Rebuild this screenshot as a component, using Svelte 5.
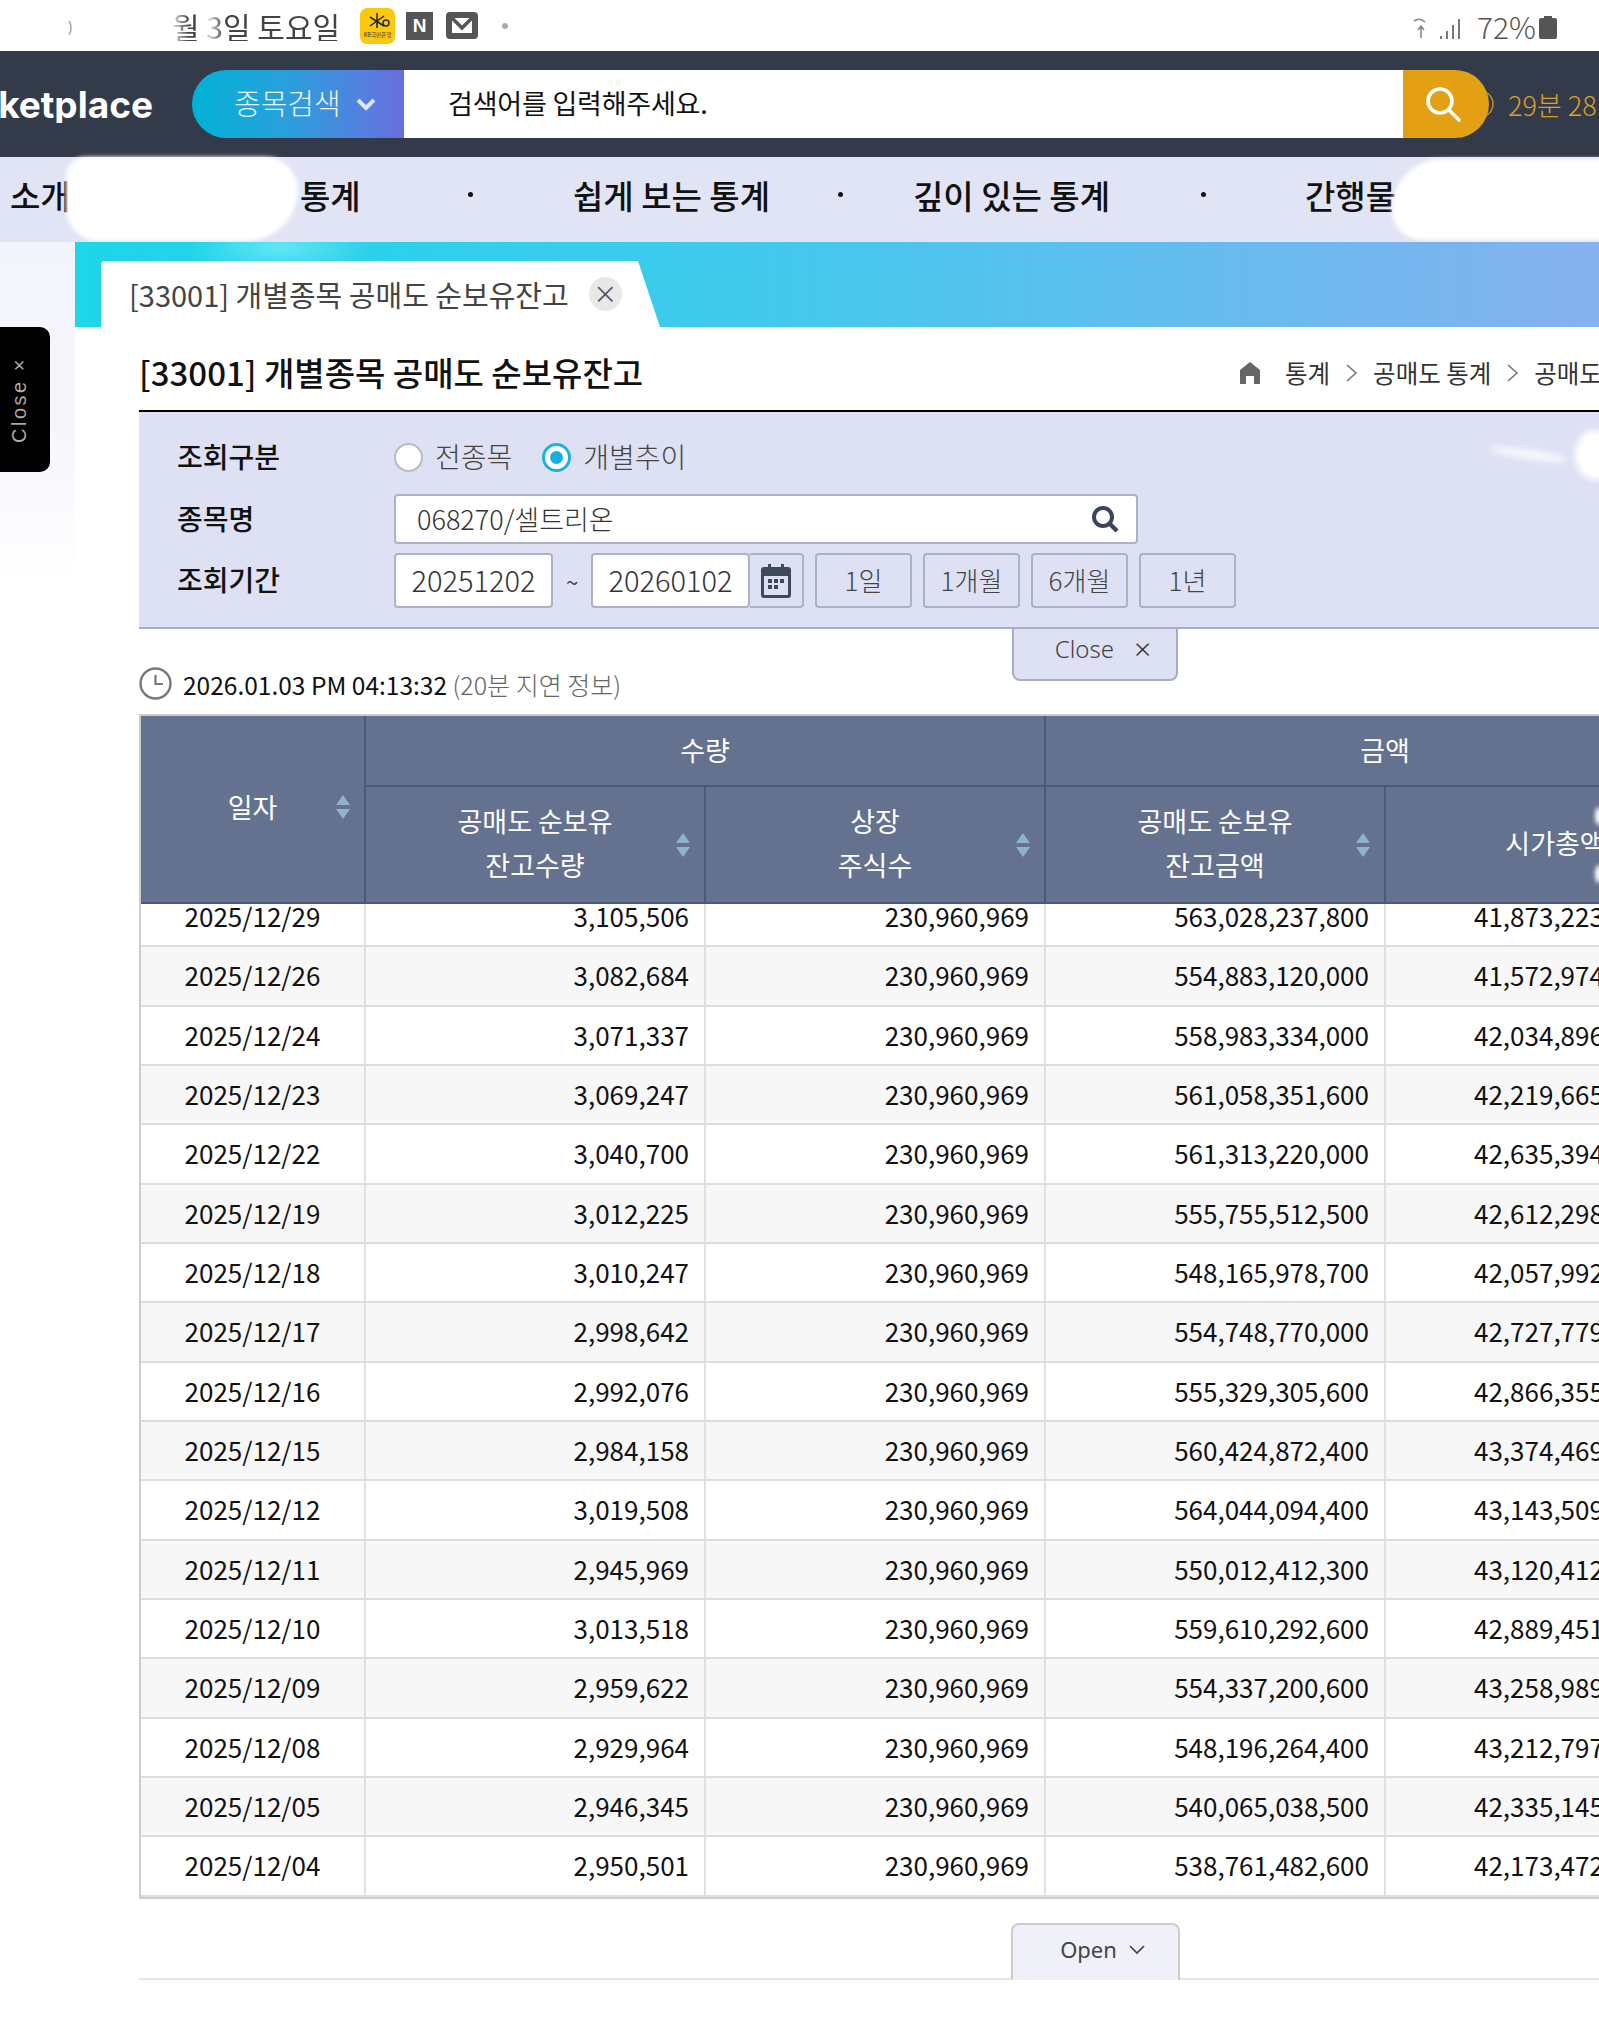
<script>
  const rows = [
    ['2025/12/29','3,105,506','563,028,237,800','41,873,223'],
    ['2025/12/26','3,082,684','554,883,120,000','41,572,974'],
    ['2025/12/24','3,071,337','558,983,334,000','42,034,896'],
    ['2025/12/23','3,069,247','561,058,351,600','42,219,665'],
    ['2025/12/22','3,040,700','561,313,220,000','42,635,394'],
    ['2025/12/19','3,012,225','555,755,512,500','42,612,298'],
    ['2025/12/18','3,010,247','548,165,978,700','42,057,992'],
    ['2025/12/17','2,998,642','554,748,770,000','42,727,779'],
    ['2025/12/16','2,992,076','555,329,305,600','42,866,355'],
    ['2025/12/15','2,984,158','560,424,872,400','43,374,469'],
    ['2025/12/12','3,019,508','564,044,094,400','43,143,509'],
    ['2025/12/11','2,945,969','550,012,412,300','43,120,412'],
    ['2025/12/10','3,013,518','559,610,292,600','42,889,451'],
    ['2025/12/09','2,959,622','554,337,200,600','43,258,989'],
    ['2025/12/08','2,929,964','548,196,264,400','43,212,797'],
    ['2025/12/05','2,946,345','540,065,038,500','42,335,145'],
    ['2025/12/04','2,950,501','538,761,482,600','42,173,472']
  ];
  const ranges = ['1일', '1개월', '6개월', '1년'];
</script>

{#snippet sort()}
  <svg class="sort" width="14" height="24" viewBox="0 0 14 24"><path d="M7 0 14 10H0Z M0 14H14L7 24Z" fill="#8db4cc"/></svg>
{/snippet}

{#snippet chev()}
  <svg class="chev" width="43" height="20" viewBox="0 0 43 20"><path d="M17 2 26 10 17 18" stroke="#777" stroke-width="1.6" fill="none"/></svg>
{/snippet}

<div class="page">
  <div class="status">
    <span class="paren">)</span>
    <span class="date">월 3일 토요일</span>
    <svg class="kb" width="35" height="36" viewBox="0 0 35 36">
      <rect width="35" height="36" rx="7" fill="#fbc80f"/>
      <path d="M17 5V20M10 9 24 18M24 8 10 18" stroke="#222" stroke-width="1.5" fill="none"/>
      <circle cx="26" cy="15" r="3" stroke="#222" stroke-width="1.4" fill="none"/>
      <text x="17.5" y="29" font-size="5.5" text-anchor="middle" fill="#333">KB국민은행</text>
    </svg>
    <span class="naver">N</span>
    <svg class="mail" width="32" height="27" viewBox="0 0 32 27">
      <rect width="32" height="27" rx="4" fill="#555"/>
      <path d="M6 6H26V21H6Z" fill="#fff"/>
      <path d="M5 5 16 16 27 5" stroke="#555" stroke-width="3.5" fill="none"/>
    </svg>
    <span class="sdot"></span>
    <span class="right">
      <svg width="50" height="24" viewBox="0 0 50 24">
        <path d="M1 5Q7 1 12 6M8 10V22M5 14 8 10 11 14" stroke="#888" stroke-width="1.6" fill="none"/>
        <path d="M28 20v3M34 15v8M40 9v14M46 3v20" stroke="#777" stroke-width="2"/>
      </svg>
      <span class="pct">72%</span>
      <svg class="batt" width="18" height="23" viewBox="0 0 18 23"><path d="M5 0h8v2h3a2 2 0 0 1 2 2v17a2 2 0 0 1-2 2H2a2 2 0 0 1-2-2V4a2 2 0 0 1 2-2h3z" fill="#555"/></svg>
    </span>
  </div>

  <header class="top">
    <div class="logo"><span>marketplace</span></div>
    <div class="pill"><span>종목검색</span>
      <svg width="22" height="14" viewBox="0 0 22 14"><path d="M3 3 11 11 19 3" stroke="#dce8fb" stroke-width="4" fill="none"/></svg>
    </div>
    <div class="query">검색어를 입력해주세요.</div>
    <div class="go">
      <svg width="38" height="38" viewBox="0 0 38 38"><circle cx="16" cy="16" r="12" stroke="#fff" stroke-width="3.6" fill="none"/><path d="M25 25 35 35" stroke="#fff" stroke-width="3.6" stroke-linecap="round"/></svg>
    </div>
    <svg class="ring" width="28" height="30" viewBox="0 0 28 30"><circle cx="13" cy="15" r="13" stroke="#b08a34" stroke-width="1.6" fill="none"/></svg>
    <div class="timer">29분 28</div>
  </header>

  <nav class="nav">
    <span>소개</span><span>통계</span><i></i><span>쉽게 보는 통계</span><i></i><span>깊이 있는 통계</span><i></i><span>간행물</span>
    <div class="blob b1"></div>
    <div class="blob b2"></div>
  </nav>

  <div class="lower">
    <div class="band">
      <div class="tab">
        <span>[33001] 개별종목 공매도 순보유잔고</span>
        <span class="x">×</span>
      </div>
    </div>

    <button class="side"><span>Close ×</span></button>

    <main class="main">
      <div class="titlerow">
        <h1>[33001] 개별종목 공매도 순보유잔고</h1>
        <div class="crumbs">
          <svg width="22" height="22" viewBox="0 0 22 22"><path d="M11 0 21 8V22H15V14H7V22H1V8Z" fill="#666"/></svg>
          <span class="c1">통계</span>{@render chev()}<span>공매도 통계</span>{@render chev()}<span>공매도</span>
        </div>
      </div>

      <section class="panel">
        <div class="wisp w1"></div>
        <div class="wisp w2"></div>
        <div class="line l1">
          <label>조회구분</label>
          <span class="radio"></span><span class="rt">전종목</span>
          <span class="radio on"></span><span class="rt">개별추이</span>
        </div>
        <div class="line l2">
          <label>종목명</label>
          <div class="stock">068270/셀트리온
            <svg width="28" height="28" viewBox="0 0 28 28"><circle cx="12" cy="12" r="9" stroke="#3a4656" stroke-width="4" fill="none"/><path d="M18 18 26 26" stroke="#3a4656" stroke-width="4.5"/></svg>
          </div>
        </div>
        <div class="line l3">
          <label>조회기간</label>
          <div class="dateinput">20251202</div>
          <span class="tilde">~</span>
          <div class="dateinput">20260102</div>
          <div class="cal">
            <svg width="30" height="34" viewBox="0 0 30 34">
              <path d="M7 0h3v5H7zM20 0h3v5h-3z" fill="#3e4a5c"/>
              <rect y="3" width="30" height="31" rx="3" fill="#3e4a5c"/>
              <rect x="3" y="12" width="24" height="19" fill="#dde1f3"/>
              <path d="M7 15h4v4H7zM13 15h4v4h-4zM19 15h4v4h-4zM7 21h4v4H7zM13 21h4v4h-4z" fill="#3e4a5c"/>
            </svg>
          </div>
          {#each ranges as r}<div class="range">{r}</div>{/each}
        </div>
      </section>
      <div class="closewrap"><div class="closetab">Close <span>×</span></div></div>

      <div class="stamp">
        <svg width="33" height="33" viewBox="0 0 33 33"><circle cx="16.5" cy="16.5" r="15" stroke="#777" stroke-width="2.4" fill="none"/><path d="M16.5 8V17H24" stroke="#777" stroke-width="2.2" fill="none"/></svg>
        <span>2026.01.03 PM 04:13:32 <em>(20분 지연 정보)</em></span>
      </div>

      <div class="grid">
        <div class="head">
          <div class="th date-h"><span>일자</span>{@render sort()}</div>
          <div class="th group">수량</div>
          <div class="th group">금액</div>
          <div class="th sub"><span>공매도 순보유<br />잔고수량</span>{@render sort()}</div>
          <div class="th sub"><span>상장<br />주식수</span>{@render sort()}</div>
          <div class="th sub"><span>공매도 순보유<br />잔고금액</span>{@render sort()}</div>
          <div class="th sub"><span>시가총액</span><div class="glow g1"></div><div class="glow g2"></div></div>
        </div>
        <div class="scroll">
          <div class="rows">
            {#each rows as r, i}
              <div class="row" class:alt={i % 2 === 1}>
                <div class="td ctr">{r[0]}</div>
                <div class="td">{r[1]}</div>
                <div class="td">230,960,969</div>
                <div class="td">{r[2]}</div>
                <div class="td last">{r[3]}</div>
              </div>
            {/each}
          </div>
        </div>
      </div>

      <div class="openwrap">
        <div class="opentab">Open
          <svg width="16" height="10" viewBox="0 0 16 10"><path d="M1 1 8 8 15 1" stroke="#444" stroke-width="1.7" fill="none"/></svg>
        </div>
      </div>
    </main>
  </div>
</div>

<style>
  :global(html), :global(body) { margin: 0; background: #fff; overflow: hidden; }
  .page {
    width: 1599px; height: 2032px; overflow: hidden; position: relative;
    font-family: "Noto Sans CJK KR", "Noto Sans", sans-serif; color: #111;
  }
  .status { height: 51px; display: flex; align-items: center; color: #444; padding-left: 68px; box-sizing: border-box; }
  .paren { font-size: 14px; color: #888; width: 104px; }
  .date {
    font-size: 30px; width: 188px; line-height: 1; white-space: nowrap;
    -webkit-mask-image: linear-gradient(90deg, rgba(0,0,0,.15) 0, #000 9%, #000 16%, rgba(0,0,0,.2) 20%, #000 28%);
    mask-image: linear-gradient(90deg, rgba(0,0,0,.15) 0, #000 9%, #000 16%, rgba(0,0,0,.2) 20%, #000 28%);
  }
  .kb { margin-right: 11px; }
  .naver { width: 27px; height: 28px; background: #555; color: #fff; font: 700 19px/28px "Liberation Sans", sans-serif; text-align: center; margin-right: 13px; }
  .mail { margin-right: 24px; }
  .sdot { width: 6px; height: 6px; border-radius: 50%; background: #aaa; }
  .right { margin-left: auto; margin-right: 42px; display: flex; align-items: center; gap: 3px; }
  .right svg:first-child { margin-right: 11px; margin-top: 4px; }
  .batt { margin-top: 3px; }
  .pct { font-size: 30px; color: #555; line-height: 1; font-weight: 300; }

  .top { height: 106px; background: #333a49; display: flex; align-items: center; position: relative; }
  .logo { width: 153px; margin-right: 39px; overflow: hidden; display: flex; justify-content: flex-end; color: #fff; font: 700 37px/1 "Inter", sans-serif; flex: none; }
  .logo span { white-space: nowrap; }
  .pill {
    width: 212px; height: 68px; box-sizing: border-box; padding-left: 42px; flex: none;
    border-radius: 34px 0 0 34px; background: linear-gradient(90deg, #00b2d6, #2a9fdc 45%, #6a6fe0);
    color: #e8f6ff; font-size: 29px; font-weight: 300; display: flex; align-items: center; gap: 14px;
  }
  .pill span { margin-top: -4px; }
  .query { width: 999px; height: 68px; background: #fff; box-sizing: border-box; padding-left: 44px; font-size: 27px; line-height: 66px; flex: none; letter-spacing: -0.2px; }
  .go { width: 86px; height: 68px; background: #e4a014; border-radius: 0 34px 34px 0; flex: none; display: flex; align-items: center; justify-content: center; padding-right: 6px; box-sizing: border-box; position: relative; z-index: 1; }
  .ring { margin-left: -22px; flex: none; }
  .timer { margin-left: 13px; color: #d9a02a; font-size: 27px; font-weight: 300; white-space: nowrap; }

  .nav {
    height: 85px; background: #e0e4f4; position: relative; box-sizing: border-box; padding: 0 0 10px 10px;
    display: grid; grid-template-columns: 290px 170px 103px 267px 73px 290px 102px auto; align-items: center;
    font-size: 33px; font-weight: 500; color: #111;
  }
  .nav span { white-space: nowrap; }
  .nav i { width: 5px; height: 5px; background: #111; border-radius: 50%; margin-left: -2px; }
  .blob { position: absolute; background: #fff; filter: blur(2px); }
  .b1 { left: 66px; top: 0; width: 232px; height: 84px; border-radius: 30px 50px 80px 50px; }
  .b2 { left: 1392px; top: 2px; width: 220px; height: 81px; border-radius: 50px 0 0 30px; }

  .lower {
    position: relative;
    background:
      linear-gradient(#fff, #fff) 75px 0 / 1524px 100% no-repeat,
      linear-gradient(#f4f5fc, #f6f7fc 200px, #fff 340px);
  }
  .band {
    margin-left: 75px; height: 85px; box-sizing: border-box; padding: 19px 0 0 26px;
    background:
      radial-gradient(ellipse 90px 26px at 205px 6px, #62e6f5, transparent),
      linear-gradient(90deg, #1dd6e8, #41c9ec 45%, #86b1ef);
  }
  .tab {
    width: 559px; height: 66px; background: #fff; box-sizing: border-box; padding-left: 28px;
    clip-path: polygon(0 0, 537px 0, 100% 100%, 0 100%); border-radius: 4px 0 0 0;
    display: flex; align-items: center; gap: 20px; font-size: 29px; color: #444; font-weight: 400; white-space: nowrap;
  }
  .x { width: 33px; height: 34px; border-radius: 50%; background: #e8e8e8; color: #555; font-size: 24px; line-height: 32px; text-align: center; flex: none; }

  .side {
    position: absolute; left: 0; top: 85px; width: 50px; height: 145px; padding: 0 12px 0 0; border: 0; box-sizing: border-box;
    background: #000; border-radius: 0 10px 10px 0; color: #aaa;
    display: flex; align-items: center; justify-content: center;
  }
  .side span { transform: rotate(-90deg); font: 400 20px/1 "Liberation Sans", sans-serif; letter-spacing: 2.5px; white-space: nowrap; }

  .main { margin-left: 139px; width: 1460px; overflow: hidden; }
  .titlerow { height: 83px; display: flex; align-items: center; padding-top: 8px; box-sizing: border-box; }
  h1 { margin: 0; font-size: 33px; font-weight: 500; width: 1100px; flex: none; white-space: nowrap; line-height: 1; }
  .crumbs { display: flex; align-items: center; font-size: 24.5px; color: #333; white-space: nowrap; }
  .crumbs .c1 { margin-left: 24px; }
  .chev { flex: none; }

  .panel { height: 219px; box-sizing: border-box; background: #dde1f3; border-top: 2px solid #000; border-bottom: 2px solid #a9adc4; padding-left: 38px; display: flex; flex-direction: column; position: relative; }
  .wisp { position: absolute; background: #fff; filter: blur(3px); }
  .w1 { left: 1350px; top: 38px; width: 80px; height: 9px; border-radius: 50%; opacity: .8; transform: rotate(8deg); }
  .w2 { left: 1436px; top: 18px; width: 40px; height: 50px; border-radius: 50%; }
  .line { display: flex; align-items: center; position: relative; }
  .line label { width: 217px; font-size: 28px; font-weight: 500; flex: none; margin-top: -3px; }
  .l1 { height: 82px; padding-top: 8px; box-sizing: border-box; }
  .radio { width: 29px; height: 29px; box-sizing: border-box; border-radius: 50%; background: #fff; border: 2px solid #bbb; flex: none; }
  .radio.on { border: 3px solid #1ab3dc; display: flex; align-items: center; justify-content: center; }
  .radio.on::after { content: ""; width: 13px; height: 13px; border-radius: 50%; background: #12b0da; }
  .rt { font-size: 28px; color: #444; font-weight: 300; margin: -3px 30px 0 12px; line-height: 1; }
  .l2 { height: 50px; }
  .stock { width: 744px; height: 50px; box-sizing: border-box; background: #fff; border: 2px solid #adb1c6; border-radius: 4px; padding: 0 17px 0 21px; display: flex; align-items: center; justify-content: space-between; font-size: 27px; line-height: 42px; font-weight: 300; color: #333; }
  .l3 { height: 55px; margin-top: 9px; }
  .dateinput { width: 159px; height: 55px; box-sizing: border-box; background: #fff; border: 2px solid #adb1c6; border-radius: 4px; text-align: center; line-height: 48px; font-size: 29px; font-weight: 300; color: #333; }
  .tilde { width: 38px; text-align: center; font-size: 22px; color: #444; }
  .cal { width: 54px; height: 55px; box-sizing: border-box; border: 2px solid #adb1c6; border-left: 0; border-radius: 0 4px 4px 0; display: flex; align-items: center; justify-content: center; margin-right: 11px; }
  .range { width: 97px; height: 55px; box-sizing: border-box; border: 2px solid #adb1c6; border-radius: 4px; text-align: center; line-height: 49px; font-size: 26px; font-weight: 300; color: #444; margin-right: 11px; }

  .closewrap { height: 55px; padding-left: 873px; margin-top: -2px; }
  .closetab { width: 166px; height: 54px; box-sizing: border-box; background: #dde1f3; border: 2px solid #a9adc4; border-top: 0; border-radius: 0 0 8px 8px; font-size: 24px; font-weight: 300; color: #444; display: flex; align-items: center; justify-content: center; gap: 20px; padding: 0 0 9px 16px; font-family: "Noto Sans", sans-serif; }
  .closetab span { font-size: 30px; line-height: 1; color: #333; }

  .stamp { height: 33px; margin-bottom: 14px; margin-top: -15px; display: flex; align-items: center; gap: 11px; font-size: 24.5px; font-weight: 400; color: #111; white-space: nowrap; }
  .stamp em { font-style: normal; color: #666; font-weight: 300; font-size: 25px; }

  .grid { border-top: 2px solid #ccc; border-left: 2px solid #ccc; width: 1584px; }
  .head { display: grid; grid-template-columns: 225px 340px 340px 340px 340px; grid-template-rows: 71px 117px; background: #64718f; color: #fff; }
  .th { position: relative; display: flex; align-items: center; justify-content: center; text-align: center; font-size: 27px; line-height: 44px; font-weight: 400; box-sizing: border-box; border-right: 2px solid #475a78; border-bottom: 2px solid #475a78; }
  .sub { padding-bottom: 3px; }
  .group { padding-bottom: 2px; }
  .date-h { grid-row: 1 / span 2; grid-column: 1; padding-bottom: 4px; }
  .group { grid-column: span 2; }
  .sort { position: absolute; right: 14px; top: 50%; margin-top: -12px; }
  .date-h .sort { margin-top: -14px; }
  .glow { position: absolute; left: 209px; width: 8px; height: 18px; background: #fff; border-radius: 50%; filter: blur(2px); }
  .g1 { top: 20px; }
  .g2 { top: 78px; }

  .scroll { height: 993px; overflow: hidden; border-bottom: 2px solid #ccc; }
  .rows { margin-top: -16px; }
  .row { display: grid; grid-template-columns: 225px 340px 340px 340px 340px; height: 59.33px; box-sizing: border-box; border-bottom: 2px solid #ddd; }
  .row.alt { background: #f7f7f7; }
  .td { box-sizing: border-box; padding-right: 15px; border-right: 2px solid #e0e0e0; text-align: right; font-size: 26px; line-height: 55px; color: #111; font-weight: 400; overflow: hidden; }
  .ctr { text-align: center; padding: 0; }
  .last { text-align: left; padding: 0 0 0 88px; }

  .openwrap { height: 81px; padding-left: 872px; box-sizing: border-box; padding-top: 24px; border-bottom: 2px solid #e6e6e6; }
  .opentab { width: 169px; height: 57px; box-sizing: border-box; background: #eff0f8; border: 2px solid #ccc; border-bottom: 0; border-radius: 8px 8px 0 0; display: flex; align-items: flex-start; justify-content: center; gap: 12px; padding-left: 14px; font: 400 22px/48px "Noto Sans", sans-serif; color: #444; }
  .opentab svg { margin-top: 20px; }
</style>
